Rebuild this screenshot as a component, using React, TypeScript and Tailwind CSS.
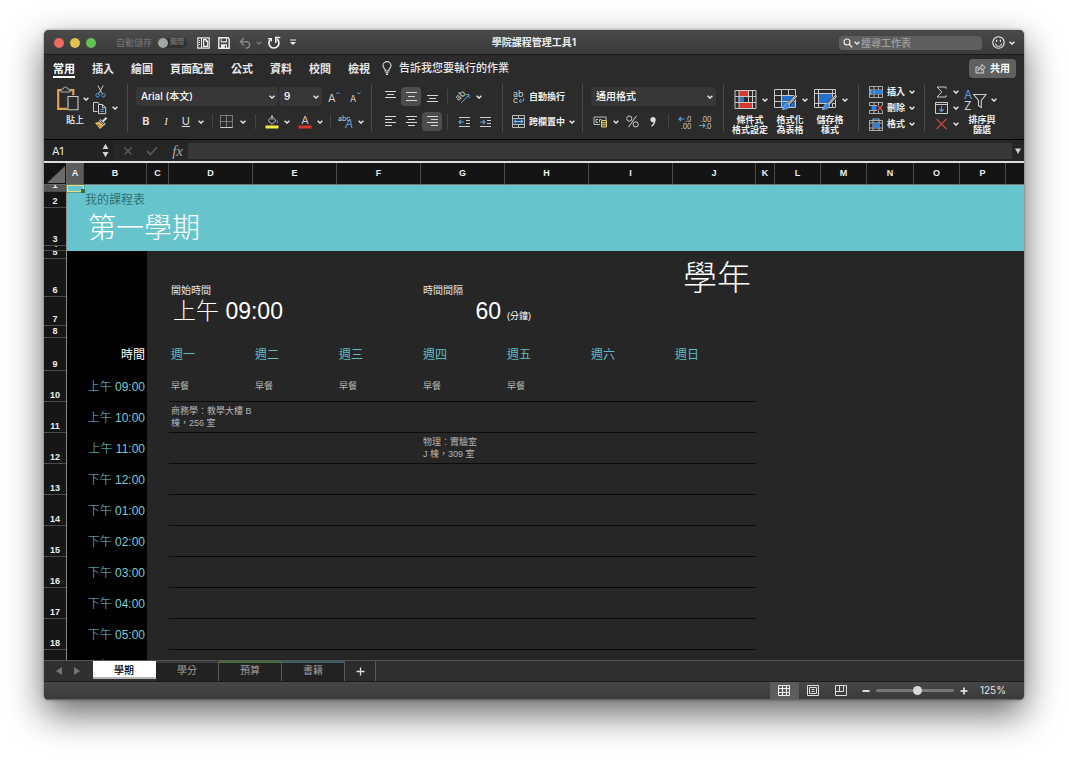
import type { ReactNode } from "react";
import clsx from "clsx";

const UI_FONT = "font-[Inter,'Noto_Sans_CJK_TC',sans-serif]";
const CELL_FONT = "font-['Liberation_Sans','Noto_Sans_CJK_TC',sans-serif]";

const MENU = ["常用", "插入", "繪圖", "頁面配置", "公式", "資料", "校閱", "檢視"];

const COLUMNS = [
  { name: "A", width: "w-[17px]" },
  { name: "B", width: "w-[63px]" },
  { name: "C", width: "w-[22px]" },
  { name: "D", width: "w-[84px]" },
  { name: "E", width: "w-[84px]" },
  { name: "F", width: "w-[84px]" },
  { name: "G", width: "w-[84px]" },
  { name: "H", width: "w-[84px]" },
  { name: "I", width: "w-[84px]" },
  { name: "J", width: "w-[83px]" },
  { name: "K", width: "w-[19px]" },
  { name: "L", width: "w-[46px]" },
  { name: "M", width: "w-[46px]" },
  { name: "N", width: "w-[47px]" },
  { name: "O", width: "w-[46px]" },
  { name: "P", width: "w-[46px]" },
];

const DAYS = ["週一", "週二", "週三", "週四", "週五", "週六", "週日"];

const SLOTS: { row: number; time: string; cells: string[] }[] = [
  { row: 10, time: "上午 09:00", cells: ["早餐", "早餐", "早餐", "早餐", "早餐"] },
  { row: 11, time: "上午 10:00", cells: ["商務學：教學大樓 B\n棟，256 室"] },
  { row: 12, time: "上午 11:00", cells: ["", "", "", "物理：實驗室\nJ 棟，309 室"] },
  { row: 13, time: "下午 12:00", cells: [] },
  { row: 14, time: "下午 01:00", cells: [] },
  { row: 15, time: "下午 02:00", cells: [] },
  { row: 16, time: "下午 03:00", cells: [] },
  { row: 17, time: "下午 04:00", cells: [] },
  { row: 18, time: "下午 05:00", cells: [] },
  { row: 19, time: "下午 06:00", cells: [] },
];

const SHEETS = [
  { name: "學期", active: true, top: "border-t-white" },
  { name: "學分", active: false, top: "border-t-[#3c3c3c]" },
  { name: "預算", active: false, top: "border-t-[#4a6b3f]" },
  { name: "書籍", active: false, top: "border-t-[#3a5f66]" },
];

function Svg({ w, h, children }: { w: number; h: number; children: ReactNode }) {
  return (
    <svg width={w} height={h} viewBox={`0 0 ${w} ${h}`} fill="none" className="block shrink-0" aria-hidden="true">
      {children}
    </svg>
  );
}

function Caret({ dim }: { dim?: boolean }) {
  return (
    <Svg w={6} h={4}>
      <path d="M.6.7 3 3.1 5.4.7" stroke={dim ? "#777" : "#e6e6e6"} strokeWidth="1.4" />
    </Svg>
  );
}

function IconButton({
  label,
  width,
  active,
  children,
}: {
  label: string;
  width: string;
  active?: boolean;
  children: ReactNode;
}) {
  return (
    <button
      aria-label={label}
      className={clsx("flex h-[19px] items-center justify-center rounded-sm", width, active && "bg-[#4d4d4d]")}
    >
      {children}
    </button>
  );
}

function Divider() {
  return <div className="h-12 w-px shrink-0 bg-[#484848]" />;
}

function Sep() {
  return <div className="h-[15px] w-px shrink-0 bg-[#444]" />;
}

function Picker({ label, value, width }: { label: string; value: string; width: string }) {
  return (
    <div className={clsx("relative h-[19px]", width)}>
      <select
        aria-label={label}
        className="block h-full w-full appearance-none rounded-sm bg-[#373737] pl-[5px] text-[10px] font-medium text-white"
      >
        <option>{value}</option>
      </select>
      <span className="pointer-events-none absolute inset-y-0 right-[3px] flex items-center">
        <Caret />
      </span>
    </div>
  );
}

function LinesIcon({ lines }: { lines: [number, number, number][] }) {
  return (
    <Svg w={13} h={13}>
      {lines.map(([y, x1, x2]) => (
        <path key={y} d={`M${x1} ${y}.5H${x2}`} stroke="#d6d6d6" />
      ))}
    </Svg>
  );
}

function TitleBar() {
  return (
    <header className="grid h-[25px] shrink-0 grid-cols-[1fr_auto_1fr] items-center border-b border-[#1a1a1a] bg-linear-to-b from-[#4a4a4a] to-[#3a3a3a] pt-px">
      <div className="flex items-center pl-[10px]">
        <div className="flex gap-[6px]">
          <button aria-label="關閉視窗" className="size-[10px] rounded-full bg-[#ec6a5e]" />
          <button aria-label="最小化" className="size-[10px] rounded-full bg-[#e0c04f]" />
          <button aria-label="全螢幕" className="size-[10px] rounded-full bg-[#61c354]" />
        </div>
        <span className="ml-5 text-[9px] text-[#777]">自動儲存</span>
        <button
          role="switch"
          aria-checked="false"
          aria-label="自動儲存"
          className="ml-[6px] flex h-[10px] w-[29px] items-center rounded-full bg-[#303030] text-[7px] text-[#8a8a8a]"
        >
          <span className="mr-[2px] size-[10px] rounded-full bg-[#a3a3a3]" />
          關閉
        </button>
        <button aria-label="檔案庫" className="ml-[10px]">
          <Svg w={13} h={12}>
            <path d="M.8.8h11.4v10.4H.8z" stroke="#e8e8e8" strokeWidth="1.2" />
            <path d="M4.500 1v10" stroke="#e8e8e8" />
            <path d="M2 3.500h1M2 5.500h1M2 7.500h1" stroke="#e8e8e8" />
            <path d="M6 2h3.200l2 2.200V10H6z" fill="#f2f2f2" />
            <path d="M7.200 3.300h1.500v1.700h1.400v3.700H7.200z" fill="#444" />
          </Svg>
        </button>
        <button aria-label="儲存" className="ml-2">
          <Svg w={12} h={12}>
            <path d="M.8.8h9.200l1.200 1.300v9.100H.8z" stroke="#eee" strokeWidth="1.4" />
            <path d="M2.800 1h6.200v4.400H2.800zM3 7.200h6v4H3z" fill="#eee" />
            <path d="M3.600 1.500h4.600v2.700H3.600zM6.800 8.400h1.200v2.400H6.800z" fill="#444" />
          </Svg>
        </button>
        <button aria-label="復原" className="ml-[9px] flex items-center gap-1">
          <Svg w={13} h={12}>
            <path d="M5 1 1.300 4.700 5 8.400M1.600 4.700h6.200a3.200 3.200 0 0 1 .3 6.300H6.500" stroke="#858585" strokeWidth="1.4" />
          </Svg>
          <Caret dim />
        </button>
        <button aria-label="重複" className="ml-[5px]">
          <Svg w={14} h={13}>
            <path d="M3.700 3.200A5 5 0 1 0 9.900 3" stroke="#eee" strokeWidth="1.7" />
            <path d="M8.800 7V1.400h4.500" stroke="#eee" strokeWidth="1.5" />
            <path d="M1 2.600h3.400v3" stroke="#eee" strokeWidth="1.2" />
          </Svg>
        </button>
        <button aria-label="自訂工具列" className="ml-[8px]">
          <Svg w={8} h={7}>
            <path d="M1 1h6" stroke="#eee" strokeWidth="1.2" />
            <path d="M1 3h6L4 6z" fill="#eee" />
          </Svg>
        </button>
      </div>
      <h1 className="text-[10px] font-bold text-[#ececec]">學院課程管理工具1</h1>
      <div className="flex items-center justify-end pr-[9px]">
        <label className="flex h-[14px] w-[143px] items-center gap-px rounded-sm bg-[#5e5e5e] pl-1">
          <Svg w={10} h={10}>
            <circle cx="4" cy="4" r="3" stroke="#eee" strokeWidth="1.1" />
            <path d="m6.200 6.200 3 3" stroke="#eee" strokeWidth="1.3" />
          </Svg>
          <Caret />
          <input
            aria-label="搜尋工作表"
            placeholder="搜尋工作表"
            className="h-full w-24 bg-transparent text-[10px] font-medium outline-none placeholder:text-[#a2a2a2]"
          />
        </label>
        <button aria-label="意見反應" className="ml-[10px] flex items-center gap-1">
          <Svg w={13} h={13}>
            <circle cx="6.500" cy="6.500" r="5.700" stroke="#eee" strokeWidth="1.1" />
            <path d="M4.600 3.800v2M8.400 3.800v2" stroke="#eee" strokeWidth="1.2" />
            <path d="M3.500 7.500a3 3 0 0 0 6 0" stroke="#eee" />
          </Svg>
          <Caret />
        </button>
      </div>
    </header>
  );
}

function MenuTabs() {
  return (
    <nav className="flex h-[27px] shrink-0 items-center pr-2 pl-[9px] text-[11px] text-[#e8e8e8]">
      <div className="flex gap-[17px]">
        {MENU.map((m, i) => (
          <button
            key={m}
            className={clsx(
              "h-[19px] border-b-2 pt-1 leading-[13px] font-bold",
              i === 0 ? "border-white text-white" : "border-transparent",
            )}
          >
            {m}
          </button>
        ))}
      </div>
      <button className="ml-3 flex items-center gap-[7px] font-medium">
        <Svg w={10} h={15}>
          <path
            d="M3.200 10V8.600C2.800 7.600 1 6.700 1 4.600a4 4 0 0 1 8 0c0 2.100-1.800 3-2.200 4V10zM3.400 11.800h3.200M4 13.400h2"
            stroke="#ddd"
            strokeWidth="1.1"
          />
        </Svg>
        告訴我您要執行的作業
      </button>
      <button className="ml-auto flex h-[19px] items-center gap-1 rounded-sm bg-[#606060] px-[6px] text-[10px] font-bold text-white">
        <Svg w={11} h={11}>
          <path d="M3.200 4H1v6h7.600V7.400" stroke="#d8d8d8" />
          <path d="M3 7.600C3.200 5 4.600 3.600 6.800 3.600V1.400l3.400 3.100-3.400 3V5.400C5 5.400 4 6 3 7.600Z" stroke="#d8d8d8" />
        </Svg>
        共用
      </button>
    </nav>
  );
}

function ClipboardGroup() {
  return (
    <div className="flex w-[83px] items-start pl-[12px]">
      <button className="flex flex-col text-[9px] leading-[12px] font-medium text-[#eee]">
        <span className="flex h-[30px] items-center gap-[3px]">
          <Svg w={24} h={26}>
            <path d="M5 4.200H2.200v18.600H11M13.500 4.200h3.800v5" stroke="#d9a45a" strokeWidth="2.2" />
            <path d="M5 6V3.200h2.200a2.200 2.200 0 0 1 4.400 0h2.200V6z" fill="#2b2b2b" stroke="#aaa" />
            <path d="M12 10.500h10v13.300H12z" fill="#2b2b2b" stroke="#ccc" strokeWidth="1.1" />
          </Svg>
          <Caret />
        </span>
        <span className="pl-[5px]">貼上</span>
      </button>
      <div className="ml-[3px] flex flex-col gap-px">
        <button aria-label="剪下" className="flex h-[15px] w-[17px] items-center justify-center">
          <Svg w={11} h={13}>
            <path d="m2.800.5 4.600 8.300M8.200.5 3.600 8.800" stroke="#ccc" />
            <circle cx="2.600" cy="10.300" r="1.700" stroke="#5c9bd8" />
            <circle cx="8.400" cy="10.300" r="1.700" stroke="#5c9bd8" />
          </Svg>
        </button>
        <button aria-label="複製" className="flex h-[15px] items-center gap-1">
          <Svg w={16} h={14}>
            <path d="M5.500 10.500h-4v-9h4.400l1.600 1.400" stroke="#ccc" />
            <path d="M6.500 3.500h4.200l3 3v6.200H6.500zM10.500 3.700v3h3" stroke="#ccc" />
            <path d="M8.300 8.500h3.600M8.300 10.500h3.600" stroke="#5c9bd8" />
          </Svg>
          <Caret />
        </button>
        <button aria-label="複製格式" className="flex h-[15px] w-[17px] items-center justify-center">
          <Svg w={14} h={13}>
            <path d="m12.600.8-4 3.600" stroke="#ddd" strokeWidth="2" />
            <path d="m5.400 3.600 4.800 4.600 1-1.300-4.300-4.300z" stroke="#ddd" fill="#2b2b2b" />
            <path d="M5 4.600 1 6l4.800 6 4-3.200z" fill="#e3b863" />
            <path d="m3 8.500 2-1M4.500 10.300l2-1.600" stroke="#2b2b2b" strokeWidth=".7" />
          </Svg>
        </button>
      </div>
    </div>
  );
}

function FontGroup() {
  return (
    <div className="flex w-[243px] flex-col gap-[6px] pt-[3px] pl-[8px]">
      <div className="flex items-center">
        <Picker label="字型" value="Arial (本文)" width="w-[142px]" />
        <div className="w-px" />
        <Picker label="字型大小" value="9" width="w-[43px]" />
        <IconButton label="放大字型" width="w-[24px]">
          <Svg w={12} h={12}>
            <text x="0" y="10.500" fontSize="11" fill="#ccc">A</text>
            <path d="m8.300 3 1.600-1.700L11.500 3" stroke="#5c9bd8" />
          </Svg>
        </IconButton>
        <IconButton label="縮小字型" width="w-[17px]">
          <Svg w={12} h={12}>
            <text x="1" y="10.500" fontSize="9" fill="#ccc">A</text>
            <path d="m8.300 1.300 1.600 1.700 1.600-1.700" stroke="#5c9bd8" />
          </Svg>
        </IconButton>
      </div>
      <div className="flex items-center text-[11px] text-[#ddd]">
        <button className="h-[19px] w-5 font-bold">B</button>
        <button className="h-[19px] w-5 font-['Liberation_Serif',serif] italic">I</button>
        <button className="flex h-[19px] w-[28px] items-center justify-end gap-2 underline">
          U
          <Caret />
        </button>
        <div className="w-2" />
        <Sep />
        <IconButton label="框線" width="w-[39px]">
          <span className="flex items-center gap-[7px]">
            <Svg w={13} h={13}>
              <path d="M.5.5h12v12H.5zM6.500.5v12M.5 6.500h12" stroke="#c4c4c4" strokeDasharray="1 1" />
              <path d="M.5 12.500h12" stroke="#ccc" />
            </Svg>
            <Caret />
          </span>
        </IconButton>
        <div className="w-[3px]" />
        <Sep />
        <IconButton label="填滿色彩" width="w-[42px]">
          <span className="flex items-center gap-[5px]">
            <Svg w={14} h={14}>
              <path d="M3 5.500 7 1.600l4 3.900-4 3.700zM7 0v5" stroke="#ccc" />
              <path d="M11.800 5.300c1 1.400 1 2.800 0 3" stroke="#5c9bd8" />
              <path d="M.5 10.500h13v3H.5z" fill="#f3ee3f" />
            </Svg>
            <Caret />
          </span>
        </IconButton>
        <IconButton label="字型色彩" width="w-[24px]">
          <span className="flex items-center gap-[5px]">
            <Svg w={14} h={14}>
              <text x="7" y="9" fontSize="11" fill="#ccc" textAnchor="middle">A</text>
              <path d="M.5 10.500h13v3H.5z" fill="#d8372e" />
            </Svg>
            <Caret />
          </span>
        </IconButton>
        <div className="w-2" />
        <Sep />
        <IconButton label="注音" width="w-[39px]">
          <span className="flex items-center gap-[4px]">
            <Svg w={16} h={14}>
              <text x="0" y="6" fontSize="7" fill="#ccc">abc</text>
              <text x="7" y="13" fontSize="12" fontStyle="italic" fill="#5c9bd8">A</text>
            </Svg>
            <Caret />
          </span>
        </IconButton>
      </div>
    </div>
  );
}

function AlignGroup() {
  return (
    <div className="flex w-[130px] flex-col gap-[6px] pt-[3px] pl-[8px]">
      <div className="flex items-center gap-px">
        <IconButton label="靠上對齊" width="w-5">
          <LinesIcon lines={[[1, 1, 12], [4, 3, 10], [7, 1, 12]]} />
        </IconButton>
        <IconButton label="置中對齊" width="w-5" active>
          <LinesIcon lines={[[2, 1, 12], [6, 3, 10], [10, 1, 12]]} />
        </IconButton>
        <IconButton label="靠下對齊" width="w-5">
          <LinesIcon lines={[[5, 1, 12], [8, 3, 10], [11, 1, 12]]} />
        </IconButton>
        <div className="w-[3px]" />
        <Sep />
        <IconButton label="方向" width="w-[40px]">
          <span className="flex items-center gap-[6px]">
            <Svg w={14} h={14}>
              <text x="0" y="9" fontSize="9" fill="#ccc" transform="rotate(-45 4 7)">ab</text>
              <path d="m5 13 8-8M9.500 4.500H13V8" stroke="#5c9bd8" />
            </Svg>
            <Caret />
          </span>
        </IconButton>
      </div>
      <div className="flex items-center gap-px">
        <IconButton label="靠左對齊" width="w-5">
          <LinesIcon lines={[[1, 1, 12], [4, 1, 8], [7, 1, 12], [10, 1, 8]]} />
        </IconButton>
        <IconButton label="水平置中" width="w-5">
          <LinesIcon lines={[[1, 1, 12], [4, 3, 10], [7, 1, 12], [10, 3, 10]]} />
        </IconButton>
        <IconButton label="靠右對齊" width="w-5" active>
          <LinesIcon lines={[[1, 1, 12], [4, 5, 12], [7, 1, 12], [10, 5, 12]]} />
        </IconButton>
        <div className="w-[3px]" />
        <Sep />
        <div className="w-1" />
        <IconButton label="減少縮排" width="w-5">
          <Svg w={13} h={12}>
            <path d="M1 1.500h11M8 4.500h4M8 7.500h4M1 10.500h11" stroke="#ccc" />
            <path d="M6 6H1m2-2L1 6l2 2" stroke="#5c9bd8" strokeWidth="1.2" />
          </Svg>
        </IconButton>
        <IconButton label="增加縮排" width="w-5">
          <Svg w={13} h={12}>
            <path d="M1 1.500h11M8 4.500h4M8 7.500h4M1 10.500h11" stroke="#ccc" />
            <path d="M1 6h5M4 4l2 2-2 2" stroke="#5c9bd8" strokeWidth="1.2" />
          </Svg>
        </IconButton>
      </div>
    </div>
  );
}

function WrapGroup() {
  return (
    <div className="flex w-[79px] flex-col gap-[6px] pt-[3px] pl-[9px] text-[9px] font-bold text-[#eee]">
      <button className="flex h-[19px] items-center gap-1">
        <Svg w={13} h={14}>
          <text x="1" y="6.500" fontSize="9" fontWeight="400" fill="#ccc">ab</text>
          <text x="1" y="13" fontSize="9" fontWeight="400" fill="#ccc">c</text>
          <path d="M11.500 8v3H7M9 9l-2 2 2 2" stroke="#5c9bd8" />
        </Svg>
        自動換行
      </button>
      <button className="flex h-[19px] items-center gap-1">
        <Svg w={13} h={13}>
          <path d="M.5.5h12v12H.5zM.5 3.500h12M.5 9.500h12M6.500.5v3M6.500 9.500v3" stroke="#bbb" />
          <path d="M1 4h11v5H1z" fill="#24476e" />
          <path d="M2.200 6.500h8.600M4 4.900 2.200 6.500 4 8.100M9 4.900l1.800 1.600L9 8.100" stroke="#8cc0f0" />
        </Svg>
        跨欄置中
        <Caret />
      </button>
    </div>
  );
}

function NumberGroup() {
  return (
    <div className="flex w-[140px] flex-col gap-[6px] pt-[3px] pl-[8px]">
      <Picker label="數值格式" value="通用格式" width="w-[125px]" />
      <div className="flex items-center">
        <IconButton label="會計格式" width="w-[30px]">
          <span className="flex items-center gap-[5px]">
            <Svg w={15} h={13}>
              <path d="M1 2h12v3M1 2v7.500h6" stroke="#bbb" />
              <path d="M5 4.500H3v3h2M8.500 4.500h-2v3" stroke="#bbb" />
              <path d="M8.500 5.500h5v6.500h-5z" fill="#4b431f" stroke="#e0cc72" />
              <path d="M8.500 7.700h5M8.500 9.800h5" stroke="#e0cc72" />
            </Svg>
            <Caret />
          </span>
        </IconButton>
        <IconButton label="百分比樣式" width="w-[22px]">
          <Svg w={13} h={13}>
            <circle cx="3.300" cy="3.600" r="2.600" stroke="#ccc" />
            <circle cx="9.700" cy="9.400" r="2.600" stroke="#ccc" />
            <path d="M10.500.8 2.500 12.200" stroke="#ccc" />
          </Svg>
        </IconButton>
        <IconButton label="千分位樣式" width="w-5">
          <Svg w={8} h={12}>
            <circle cx="4" cy="3.600" r="2.600" fill="#ddd" />
            <path d="M5.700 3.600c.2 3-1 5-3.200 6.600" stroke="#ddd" strokeWidth="1.4" />
          </Svg>
        </IconButton>
        <div className="w-[5px]" />
        <Sep />
        <div className="w-[6px]" />
        <IconButton label="增加小數位數" width="w-5">
          <Svg w={14} h={14}>
            <path d="M6.500 4H1M3 2 1 4l2 2" stroke="#5c9bd8" strokeWidth="1.2" />
            <text x="13.500" y="6.500" fontSize="7" fill="#ccc" textAnchor="end">.0</text>
            <text x="13.500" y="13.500" fontSize="7" fill="#ccc" textAnchor="end">.00</text>
          </Svg>
        </IconButton>
        <IconButton label="減少小數位數" width="w-5">
          <Svg w={14} h={14}>
            <path d="M1 10.500h6M5 8.500l2 2-2 2" stroke="#5c9bd8" strokeWidth="1.2" />
            <text x="13.500" y="6.500" fontSize="7" fill="#ccc" textAnchor="end">.00</text>
            <text x="13.500" y="13.500" fontSize="7" fill="#ccc" textAnchor="end">.0</text>
          </Svg>
        </IconButton>
      </div>
    </div>
  );
}

function StyleButton({ lines, children }: { lines: [string, string]; children: ReactNode }) {
  return (
    <button className="flex w-10 flex-col text-[9px] leading-[10px] font-bold text-[#eee]">
      <span className="flex h-[31px] items-center gap-1 pl-1">
        {children}
        <Caret />
      </span>
      <span className="w-10 text-center whitespace-nowrap">
        {lines[0]}
        <br />
        {lines[1]}
      </span>
    </button>
  );
}

function Brush() {
  return (
    <>
      <path d="m22.300 6.500-8 9.500" stroke="#2b2b2b" strokeWidth="4" />
      <path d="m22.300 6.500-8 9" stroke="#ddd" strokeWidth="2.4" />
      <path d="m22.300 6.500-8 9" stroke="#555" strokeWidth=".8" />
      <path
        d="M13.700 14.500c1.600.4 2.200 1.600 1.600 3-.9 2.200-4 3-7.300 3 1.700-.7 1.600-1.500 2-3 .4-2 2-3.300 3.700-3Z"
        fill="#3f86d6"
        stroke="#9cc8f2"
        strokeWidth=".7"
      />
    </>
  );
}

function StylesGroup() {
  return (
    <div className="flex w-[134px] pl-[6px]">
      <StyleButton lines={["條件式", "格式設定"]}>
        <Svg w={24} h={20}>
          <path d="M5 1h10v5H5zM5 12.500h13v6H5z" fill="#d8392c" />
          <path d="M5 6.500h5v6H5z" fill="#3c6fc0" />
          <path d="M14.500 6.500v6" stroke="#d8392c" />
          <path d="M1 .5h21v18H1zM5 .5v18M14.500.5v18M18.500.5v18M1 6.500h21M1 12.500h21" stroke="#c8c8c8" />
          <path d="M6 1h8v5H6zM6 13h12v5H6z" fill="#d8392c" />
        </Svg>
      </StyleButton>
      <StyleButton lines={["格式化", "為表格"]}>
        <Svg w={24} h={22}>
          <path d="M8 6.500h14v12H8z" fill="#2470cc" />
          <path d="M.5.5h21v18H.5zM7.500.5v18M14.500.5v18M.5 6.500h21M.5 12.500h21" stroke="#c8c8c8" />
          <path d="M8 7h13v5H8zM8 13h13v5H8z" fill="#2470cc" />
          <Brush />
        </Svg>
      </StyleButton>
      <StyleButton lines={["儲存格", "樣式"]}>
        <Svg w={24} h={22}>
          <path d="M.5.5h21v18H.5zM4.500.5v18M18.500.5v18M.5 4.500h21M.5 14.500h21" stroke="#c8c8c8" />
          <path d="M5 5h13v9H5z" fill="#2470cc" />
          <Brush />
        </Svg>
      </StyleButton>
    </div>
  );
}

function CellsGroup() {
  return (
    <div className="flex w-[65px] flex-col pl-[10px] text-[9px] font-bold text-[#eee]">
      <button className="flex h-4 items-center gap-1">
        <Svg w={14} h={12}>
          <path d="M.5.5h13v11H.5zM5 .5v11M9.500.5v11M.5 4h13M.5 8h13" stroke="#b8b8b8" strokeWidth=".9" />
          <path d="M4 4h9.500v4H4z" fill="#2f7fdb" />
          <path d="M6 6H0M2.500 3.500 0 6l2.500 2.500" stroke="#6db1f5" strokeWidth="1.2" />
        </Svg>
        插入
        <Caret />
      </button>
      <button className="flex h-4 items-center gap-1">
        <Svg w={14} h={12}>
          <path
            d="M.5 3.500v-3h13v3M.5 8.500v3h13v-3M5 .5v3M9.500.5v3M5 8.500v3M9.500 8.500v3M0 3.500h8M0 8.500h8"
            stroke="#b8b8b8"
            strokeWidth=".9"
          />
          <path d="M2.500 4h5v4h-5z" fill="#2f7fdb" />
          <path d="m8.800 3.500 4.500 5M13.300 3.500l-4.500 5" stroke="#e0524a" strokeWidth="1.2" />
        </Svg>
        刪除
        <Caret />
      </button>
      <button className="flex h-4 items-center gap-1">
        <Svg w={14} h={13}>
          <path d="M.5 2.500h13v10H.5zM4 .5v12M10 .5v12M.5 5h13M.5 10h13" stroke="#b8b8b8" strokeWidth=".9" />
          <path d="M4 5h6v5H4z" fill="#2f7fdb" />
          <path d="M4 1h6" stroke="#6db1f5" />
        </Svg>
        格式
        <Caret />
      </button>
    </div>
  );
}

function EditGroup() {
  return (
    <div className="flex pl-[10px]">
      <div className="flex w-[29px] flex-col">
        <button aria-label="自動加總" className="flex h-4 items-center gap-[5px]">
          <Svg w={13} h={12}>
            <path d="M11 2.700V1H2l4.800 5L2 11h9V9.300" stroke="#ccc" />
          </Svg>
          <Caret />
        </button>
        <button aria-label="填滿" className="flex h-4 items-center gap-[5px]">
          <Svg w={13} h={12}>
            <path d="M.5.5h12v11H.5zM.5 2.500h12" stroke="#ccc" />
            <path d="M6.500 4v5.500M4.300 7.300l2.200 2.200 2.200-2.200" stroke="#5c9bd8" strokeWidth="1.2" />
          </Svg>
          <Caret />
        </button>
        <button aria-label="清除" className="flex h-4 items-center gap-[5px]">
          <Svg w={13} h={12}>
            <path d="m1.500 1 10 10M11.500 1l-10 10" stroke="#c2474a" strokeWidth="1.2" />
          </Svg>
          <Caret />
        </button>
      </div>
      <button className="flex w-[36px] flex-col text-[9px] leading-[10px] font-bold text-[#eee]">
        <span className="flex h-[31px] items-center gap-1">
          <Svg w={23} h={22}>
            <text x="0" y="9.500" fontSize="12" fontWeight="400" fill="#5c9bd8">A</text>
            <text x="0" y="21" fontSize="12" fontWeight="400" fill="#ccc">Z</text>
            <path d="M9.700 5.500H22l-4.700 6v7l-2.800-1.800v-5.200z" stroke="#ccc" strokeWidth="1.1" />
          </Svg>
          <Caret />
        </span>
        <span className="w-full text-center">
          排序與
          <br />
          篩選
        </span>
      </button>
    </div>
  );
}

function Ribbon() {
  return (
    <section className="flex h-[58px] shrink-0 items-start overflow-hidden border-b border-black pt-[2px]">
      <ClipboardGroup />
      <Divider />
      <FontGroup />
      <Divider />
      <AlignGroup />
      <Divider />
      <WrapGroup />
      <Divider />
      <NumberGroup />
      <Divider />
      <StylesGroup />
      <Divider />
      <CellsGroup />
      <Divider />
      <EditGroup />
    </section>
  );
}

function FormulaBar() {
  return (
    <div className="flex h-[23px] shrink-0 items-center border-b-2 border-[#dcdcdc] bg-[#262626]">
      <input
        aria-label="名稱方塊"
        defaultValue="A1"
        className="h-full w-[57px] bg-[#222] pl-2 text-[11px] text-[#e6e6e6] outline-none"
      />
      <button aria-label="選擇名稱" className="flex h-full w-[12px] items-center bg-[#222]">
        <Svg w={9} h={15}>
          <path d="M1.500 6 4.500.8 7.500 6zM1.500 9h6l-3 5.200z" fill="#d0d0d0" />
        </Svg>
      </button>
      <button aria-label="取消" className="ml-[10px]">
        <Svg w={10} h={10}>
          <path d="m1.500 1.500 7 7M8.500 1.500l-7 7" stroke="#5a5a5a" strokeWidth="1.5" />
        </Svg>
      </button>
      <button aria-label="輸入" className="ml-[13px]">
        <Svg w={12} h={10}>
          <path d="m1 5.200 3.400 3.300L11 1.200" stroke="#5a5a5a" strokeWidth="1.7" />
        </Svg>
      </button>
      <span className="w-[26px] pr-px text-right font-['Liberation_Serif',serif] text-[15px] leading-5 text-[#a8a8a8] italic">
        fx
      </span>
      <input aria-label="公式" className="ml-1 h-4 min-w-0 flex-1 bg-[#373737] px-1 text-[10px] text-white outline-none" />
      <button aria-label="展開資料編輯列" className="flex w-3 justify-center">
        <Svg w={6} h={6}>
          <path d="M0 .5h6L3 6z" fill="#d0d0d0" />
        </Svg>
      </button>
    </div>
  );
}

function RowHead({ n, height, selected }: { n: number; height: string; selected?: boolean }) {
  return (
    <th scope="row" className="border-r border-[#8a8a8a] p-0">
      <div
        className={clsx(
          "flex items-end justify-center overflow-hidden border-b border-[#4a4a4a] pb-px text-[9px] leading-[9px] font-bold text-[#eee]",
          height,
          selected ? "bg-[#555]" : "bg-[#161616]",
        )}
      >
        {n}
      </div>
    </th>
  );
}

function Sheet() {
  return (
    <main className={clsx("min-h-0 flex-1 overflow-hidden bg-[#262626]", CELL_FONT)}>
      <table className="w-full table-fixed border-separate border-spacing-0">
        <colgroup>
          <col className="w-[23px]" />
          {COLUMNS.map((c) => (
            <col key={c.name} className={c.width} />
          ))}
          <col />
        </colgroup>
        <thead>
          <tr className="bg-[#141414] text-[9px] text-[#eee]">
            <th aria-label="全選" className="border-r border-b border-[#666] p-0">
              <div className="flex h-[21px] items-end justify-end p-px">
                <Svg w={18} h={17}>
                  <path d="M18 0v17H0z" fill="#6a6a6a" />
                </Svg>
              </div>
            </th>
            {COLUMNS.map((c) => (
              <th
                key={c.name}
                scope="col"
                className={clsx("border-r border-b border-r-[#4a4a4a] border-b-[#777] p-0", c.name === "A" && "bg-[#5c5c5c]")}
              >
                {c.name}
              </th>
            ))}
            <th className="border-b border-[#777]" />
          </tr>
        </thead>
        <tbody>
          <tr>
            <RowHead n={1} height="h-[7px]" selected />
            <td className="relative bg-[#68c4cc] p-0">
              <div className="absolute inset-0 border border-[#e2e08a] outline outline-[#4f7a3f]/50" />
              <div className="absolute -right-px -bottom-px size-1 bg-[#3f6b3a]" />
            </td>
            <td colSpan={16} className="bg-[#68c4cc]" />
          </tr>
          <tr className="bg-[#68c4cc]">
            <RowHead n={2} height="h-4" />
            <td />
            <td colSpan={16} className="p-0 pl-px text-[12px] leading-[14px] text-[#2e7177]">
              我的課程表
            </td>
          </tr>
          <tr className="bg-[#68c4cc]">
            <RowHead n={3} height="h-[38px]" />
            <td />
            <td colSpan={16} className="p-0 pt-1 pl-1 text-[28px] leading-none font-light text-white">
              第一學期
            </td>
          </tr>
          <tr className="bg-[#68c4cc]">
            <RowHead n={4} height="h-[5px]" />
            <td colSpan={17} />
          </tr>
          <tr>
            <RowHead n={5} height="h-[8px]" />
            <td colSpan={2} className="bg-black" />
            <td colSpan={15} />
          </tr>
          <tr className="text-[10px] leading-3 text-[#e4e4e4]">
            <RowHead n={6} height="h-[38px]" />
            <td colSpan={2} className="bg-black" />
            <td />
            <td colSpan={3} className="p-0 pl-[2px] align-bottom">
              開始時間
            </td>
            <td colSpan={2} className="p-0 pl-[2px] align-bottom">
              時間間隔
            </td>
            <td colSpan={2} className="p-0 pr-[5px] text-right text-[34px] leading-9 font-light text-white">
              學年
            </td>
            <td colSpan={7} />
          </tr>
          <tr className="text-white">
            <RowHead n={7} height="h-[29px]" />
            <td colSpan={2} className="bg-black" />
            <td />
            <td colSpan={3} className="p-0 pb-[2px] pl-1 text-[23px] leading-6 font-light">
              上午 09:00
            </td>
            <td className="p-0 pr-1 pb-[2px] text-right text-[23px] leading-6">60</td>
            <td className="p-0 pt-2 pl-[2px] text-[9px] leading-3">(分鐘)</td>
            <td colSpan={9} />
          </tr>
          <tr>
            <RowHead n={8} height="h-[12px]" />
            <td colSpan={2} className="bg-black" />
            <td colSpan={15} />
          </tr>
          <tr className="text-left text-[12px] leading-4">
            <RowHead n={9} height="h-[33px]" />
            <td className="bg-black" />
            <td className="bg-black p-0 pr-[2px] text-right text-white">時間</td>
            <td />
            {DAYS.map((d) => (
              <td key={d} className="p-0 pl-[2px] text-[#5fbcc4]">
                {d}
              </td>
            ))}
            <td colSpan={7} />
          </tr>
          {SLOTS.map((s) => (
            <tr key={s.row}>
              <RowHead n={s.row} height="h-[31px]" />
              <td className="bg-black" />
              <td className="bg-black p-0 pr-[2px] text-right text-[12px] leading-4 font-light whitespace-nowrap text-[#74cdd6]">
                {s.time}
              </td>
              <td />
              {DAYS.map((d, i) => (
                <td
                  key={d}
                  className="border-b border-[#0c0c0c] p-0 pl-[2px] text-[9px] leading-3 whitespace-pre text-[#b4b4b4]"
                >
                  {s.cells[i]}
                </td>
              ))}
              <td colSpan={7} />
            </tr>
          ))}
        </tbody>
      </table>
    </main>
  );
}

function SheetTabs() {
  return (
    <div className="flex h-[22px] shrink-0 items-start border-t border-b border-t-[#555] border-b-[#1c1c1c] bg-[#303030] text-[10px]">
      <div className="flex w-[49px] items-center gap-3 self-stretch pl-3">
        <button aria-label="上一張工作表">
          <Svg w={6} h={8}>
            <path d="M6 0v8L0 4z" fill="#777" />
          </Svg>
        </button>
        <button aria-label="下一張工作表">
          <Svg w={6} h={8}>
            <path d="M0 0v8l6-4z" fill="#777" />
          </Svg>
        </button>
      </div>
      {SHEETS.map((s) => (
        <button
          key={s.name}
          className={clsx(
            "w-[63px] border-t-2 border-r leading-[14px]",
            s.top,
            s.active
              ? "h-[18px] border-r-white border-b-2 border-b-[#b5b5b5] bg-white font-medium text-black"
              : "h-5 border-r-[#5a5a5a] bg-[#222] pb-1 text-[#a0a0a0]",
          )}
        >
          {s.name}
        </button>
      ))}
      <button aria-label="新增工作表" className="flex h-5 w-[31px] items-center justify-center border-r border-[#5a5a5a] bg-[#2b2b2b]">
        <Svg w={9} h={9}>
          <path d="M4.500.5v8M.5 4.500h8" stroke="#ddd" strokeWidth="1.3" />
        </Svg>
      </button>
    </div>
  );
}

function StatusBar() {
  return (
    <footer className="flex h-[18px] shrink-0 items-center justify-end border-b border-[#666] bg-linear-to-b from-[#474747] to-[#3a3a3a] pr-[18px]">
      <button aria-label="標準模式" className="flex h-full w-[29px] items-center justify-center bg-[#5c5c5c]">
        <Svg w={12} h={11}>
          <path d="M.5.5h11v10H.5zM4.500.5v10M8.500.5v10M.5 3.500h11M.5 7.500h11" stroke="#eee" />
        </Svg>
      </button>
      <button aria-label="整頁模式" className="flex w-[28px] justify-center">
        <Svg w={12} h={11}>
          <path d="M.5.5h11v10H.5zM2.500 2.500h7v6h-7zM4.500 4.500h3M4.500 6.500h3" stroke="#ddd" />
        </Svg>
      </button>
      <button aria-label="分頁預覽" className="flex w-[29px] justify-center">
        <Svg w={12} h={11}>
          <path d="M.5.5h11v10H.5zM4.500.5v6M8.500.5v6M.5 6.500h8" stroke="#ddd" />
        </Svg>
      </button>
      <button aria-label="縮小" className="ml-[6px]">
        <Svg w={8} h={8}>
          <path d="M.5 4h7" stroke="#eee" strokeWidth="1.8" />
        </Svg>
      </button>
      <input
        type="range"
        aria-label="顯示比例"
        min={0}
        max={100}
        defaultValue={54}
        className="mx-[6px] h-[3px] w-[78px] appearance-none rounded-full bg-[#777] [&::-webkit-slider-thumb]:size-[9px] [&::-webkit-slider-thumb]:appearance-none [&::-webkit-slider-thumb]:rounded-full [&::-webkit-slider-thumb]:bg-[#d8d8d8]"
      />
      <button aria-label="放大">
        <Svg w={8} h={8}>
          <path d="M.5 4h7M4 .5v7" stroke="#eee" strokeWidth="1.6" />
        </Svg>
      </button>
      <span className="ml-3 text-[10px] text-[#e0e0e0]">125%</span>
    </footer>
  );
}

export default function App() {
  return (
    <div className={clsx("h-screen overflow-hidden bg-white px-11 pt-[30px] pb-[59px]", UI_FONT)}>
      <div className="flex h-full flex-col overflow-hidden rounded-[5px] bg-[#2b2b2b] shadow-[0_0_3px_rgba(0,0,0,0.4),0_14px_36px_rgba(0,0,0,0.6)]">
        <TitleBar />
        <MenuTabs />
        <Ribbon />
        <FormulaBar />
        <Sheet />
        <SheetTabs />
        <StatusBar />
      </div>
    </div>
  );
}
